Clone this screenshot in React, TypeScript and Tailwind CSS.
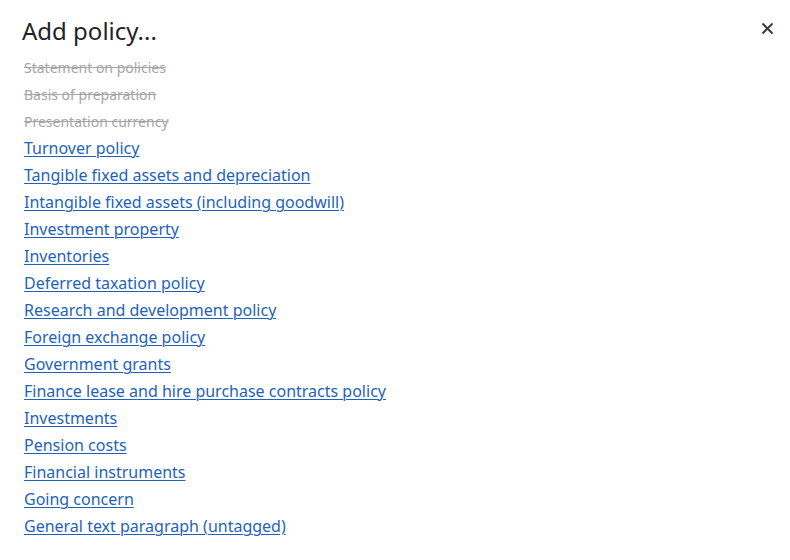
const disabled = ['Statement on policies', 'Basis of preparation', 'Presentation currency']

const policies = [
  'Turnover policy',
  'Tangible fixed assets and depreciation',
  'Intangible fixed assets (including goodwill)',
  'Investment property',
  'Inventories',
  'Deferred taxation policy',
  'Research and development policy',
  'Foreign exchange policy',
  'Government grants',
  'Finance lease and hire purchase contracts policy',
  'Investments',
  'Pension costs',
  'Financial instruments',
  'Going concern',
  'General text paragraph (untagged)',
]

const App = () => {
  return <div className="w-[790px] h-[560px] bg-white relative overflow-hidden" style={{ fontFamily: '"Noto Sans", "Open Sans", sans-serif' }}>
    <div className="flex items-start justify-between pl-[22px] pr-[13px] pt-[14px]">
      <h1 className="text-[24px] leading-[34px] text-[#1f2328]">Add policy...</h1>
      <button className="mt-[4px] w-[20px] h-[20px] flex items-center justify-center text-[#333d47]">
        <svg width="13" height="13" viewBox="0 0 13 13" fill="none" stroke="currentColor" strokeWidth="2">
          <path d="M1.5 1.5 L11.5 11.5 M11.5 1.5 L1.5 11.5" />
        </svg>
      </button>
    </div>
    <ul className="flex flex-col pl-[24px] mt-[6px] text-[16px] leading-[27px]">
      {disabled.map(t => <li key={t} className="text-[14px] text-[#a6a6a6] line-through">{t}</li>)}
      {policies.map(t => <li key={t}><a href="#" className="text-[#1f63b8] underline underline-offset-2 decoration-1">{t}</a></li>)}
    </ul>
  </div>
}

export default App
